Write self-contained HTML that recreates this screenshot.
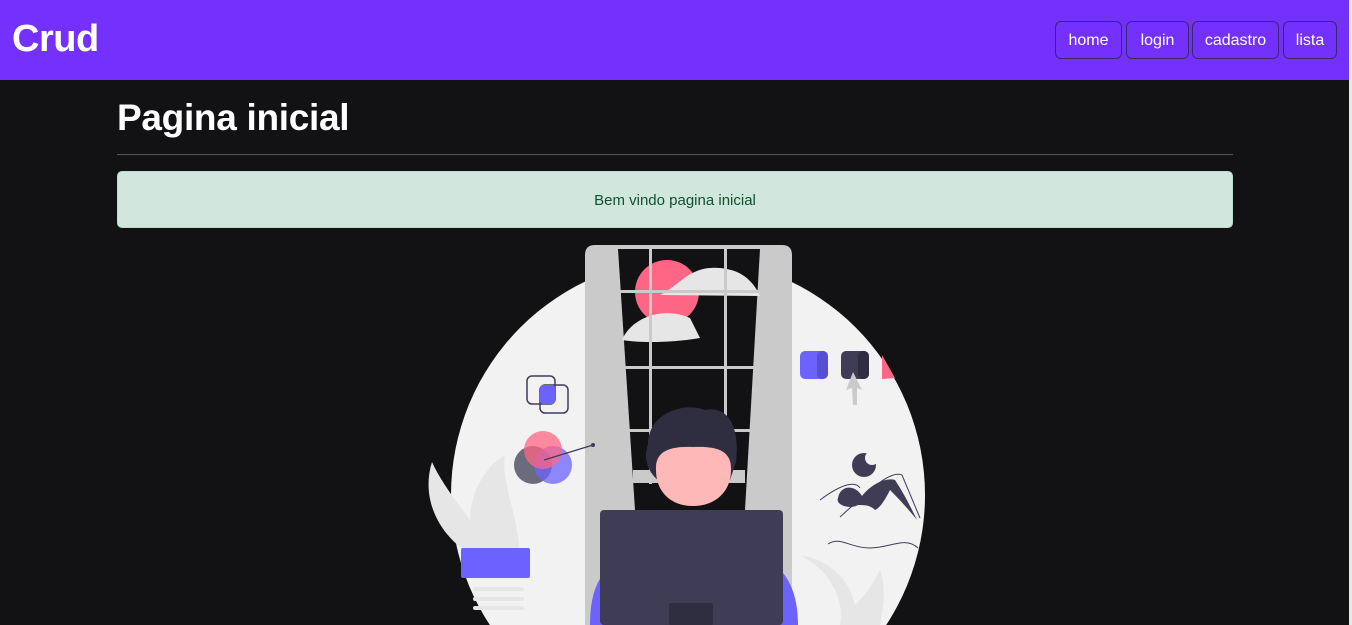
<!DOCTYPE html>
<html><head><meta charset="utf-8"><style>
*{margin:0;padding:0;box-sizing:border-box}
body{width:1352px;height:625px;overflow:hidden;background:#121214;font-family:"Liberation Sans",sans-serif;position:relative}
.hdr{position:absolute;left:0;top:0;width:1349px;height:80px;background:#7430fd}
.brand{position:absolute;left:12px;top:18px;color:#fff;font-size:38px;font-weight:bold;letter-spacing:-0.5px}
.nav{position:absolute;top:21px;height:38px;border:1px solid #3a2a6a;border-radius:6px;color:#fff;font-size:16px;line-height:38px;text-align:center}
h1{position:absolute;left:117px;top:97px;color:#fff;font-size:37px;font-weight:bold;letter-spacing:-0.3px}
.hr{position:absolute;left:117px;top:154px;width:1116px;height:1px;background:#555}
.alert{position:absolute;left:117px;top:171px;width:1116px;height:57px;background:#d1e7dd;border:1px solid #badbcc;border-radius:5px;color:#0f5132;font-size:15px;text-align:center;line-height:58px}
.sb{position:absolute;left:1349px;top:0;width:3px;height:625px;background:#e8e8e8}
</style></head><body>
<div class="hdr">
<div class="brand">Crud</div>
<div class="nav" style="left:1055px;width:67px">home</div>
<div class="nav" style="left:1126px;width:63px">login</div>
<div class="nav" style="left:1192px;width:87px">cadastro</div>
<div class="nav" style="left:1283px;width:54px">lista</div>
</div>
<div class="sb"></div>
<h1>Pagina inicial</h1>
<div class="hr"></div>
<div class="alert">Bem vindo pagina inicial</div>
<svg style="position:absolute;left:0;top:0" width="1349" height="625">
<circle cx="688" cy="495" r="237" fill="#f2f2f2"/>
<path d="M432 462 C420 500,440 540,480 560 L520 560 C520 520,500 480,505 455 C480 470,470 500,470 520 C455 500,440 480,432 462Z" fill="#e6e6e6"/>
<rect x="461" y="548" width="69" height="30" rx="2" fill="#6c63ff"/>
<rect x="473" y="587" width="51" height="4" rx="2" fill="#e6e6e6"/>
<rect x="473" y="597" width="51" height="4" rx="2" fill="#e6e6e6"/>
<rect x="473" y="606" width="51" height="4" rx="2" fill="#e6e6e6"/>
<path d="M800 555 C830 570,845 600,840 625 L880 625 C885 600,885 585,880 570 C870 590,860 600,855 605 C850 580,830 560,800 555Z" fill="#e6e6e6"/>
<path d="M585 625 L585 255 Q585 245 595 245 L782 245 Q792 245 792 255 L792 625Z" fill="#cacaca"/>
<path d="M618 249 L760 249 L745 510 L635 510Z" fill="#121214"/>
<circle cx="667" cy="292" r="32" fill="#ff6584"/>
<path d="M660 295 C680 285,690 265,720 268 C745 270,755 285,760 296 Z" fill="#e6e6e6"/>
<path d="M622 340 C630 320,660 305,690 318 L700 338 C670 343,640 343,622 340Z" fill="#e6e6e6"/>
<g fill="#cacaca">
<rect x="618" y="290" width="142" height="3"/>
<rect x="620" y="366" width="135" height="3"/>
<rect x="628" y="429" width="122" height="3"/>
<rect x="633" y="470" width="112" height="13"/>
<rect x="649" y="249" width="3" height="235"/>
<rect x="724" y="249" width="3" height="235"/>
</g>
<path d="M590 625 C590 590,600 560,640 555 L750 555 C785 560,798 590,798 625Z" fill="#6c63ff"/>
<path d="M648 445 C648 412,685 402,705 410 C730 405,740 430,736 462 L730 480 L660 482 C645 470,644 455,648 445Z" fill="#2f2e41"/>
<path d="M656 470 C655 452,668 446,693 447 C716 446,732 450,731 470 C731 492,715 506,693 506 C671 506,656 492,656 470Z" fill="#ffb8b8"/>
<rect x="600" y="510" width="183" height="115" rx="4" fill="#3f3d56"/>
<rect x="669" y="603" width="44" height="22" rx="2" fill="#2f2e41"/>
<rect x="527" y="376" width="28" height="28" rx="5" fill="none" stroke="#3f3d56" stroke-width="1.5"/>
<rect x="540" y="385" width="28" height="28" rx="5" fill="none" stroke="#3f3d56" stroke-width="1.5"/>
<rect x="540" y="385" width="15" height="19" rx="3" fill="#6c63ff"/>
<circle cx="533" cy="465" r="19" fill="#3f3d56" opacity=".75"/>
<circle cx="553" cy="465" r="19" fill="#6c63ff" opacity=".75"/>
<circle cx="543" cy="450" r="19" fill="#ff6584" opacity=".75"/>
<line x1="544" y1="460" x2="593" y2="445" stroke="#3f3d56" stroke-width="1.2"/>
<circle cx="593" cy="445" r="2" fill="#3f3d56"/>
<rect x="800" y="351" width="28" height="28" rx="5" fill="#6c63ff"/>
<rect x="817" y="351" width="11" height="28" rx="5" fill="#5650d0"/>
<rect x="841" y="351" width="28" height="28" rx="5" fill="#3f3d56"/>
<rect x="858" y="351" width="11" height="28" rx="5" fill="#2f2e41"/>
<path d="M882 355 L895 378 L882 379Z" fill="#ff6584"/>
<path d="M853 372 L846 390 L852 388 L853 405 L857 405 L857 388 L862 390Z" fill="#cacaca"/>
<circle cx="864" cy="465" r="12" fill="#3f3d56"/>
<circle cx="872" cy="458" r="7" fill="#f2f2f2"/>
<path d="M838 498 C840 485,855 484,862 496 C875 480,890 478,895 480 C905 495,912 510,917 520 C905 505,895 495,890 490 C885 500,880 508,875 510 C870 505,865 505,858 505 C850 510,835 505,838 498Z" fill="#3f3d56"/>
<path d="M820 500 C840 485,855 480,860 488 M840 517 C870 490,890 470,902 475 L920 518" fill="none" stroke="#3f3d56" stroke-width="1"/>
<path d="M828 544 C840 536,850 548,870 548 C890 548,905 536,918 548" fill="none" stroke="#3f3d56" stroke-width="1"/>
</svg>
</body></html>
